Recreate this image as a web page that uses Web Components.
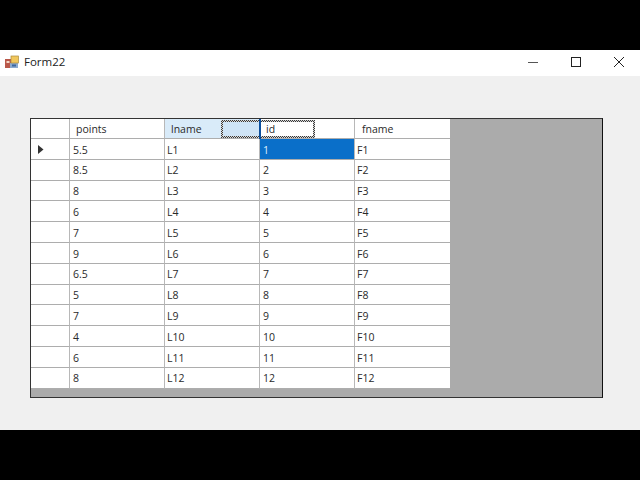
<!DOCTYPE html>
<html><head><meta charset="utf-8"><title>Form22</title>
<style>
html,body{margin:0;padding:0;background:#000;}
body{width:640px;height:480px;overflow:hidden;font-family:"Open Sans","Noto Sans",sans-serif;color:#222;}
</style></head><body>
<win-form>
  <title-bar slot="bar">Form22</title-bar>
  <data-grid></data-grid>
</win-form>
<script>
class WinForm extends HTMLElement{
  constructor(){super();const s=this.attachShadow({mode:"open"});
  s.innerHTML=`<style>
  :host{display:flex;flex-direction:column;height:380px;margin-top:50px;margin-bottom:50px;background:#f0f0f0;}
  .client{flex:1;padding:42px 37px 32px 30px;display:flex;min-height:0;}
  </style><slot name="bar"></slot><div class="client"><slot></slot></div>`;}
}
class TitleBar extends HTMLElement{
  constructor(){super();const s=this.attachShadow({mode:"open"});
  s.innerHTML=`<style>
  :host{display:flex;align-items:center;height:26px;box-sizing:border-box;padding-bottom:3px;background:#fff;flex:none;}
  .ico{margin-left:5px;width:14px;height:14px;flex:none;display:block;}
  .cap{margin-left:5px;font:11.5px "Open Sans",sans-serif;color:#222;flex:1;}
  .btns{display:flex;margin-right:0;}
  .btn{width:43px;height:23px;display:flex;align-items:center;justify-content:center;}
  svg{display:block;}
  </style>
  <svg class="ico" viewBox="0 0 14 14">
    <rect x="0" y="4" width="7" height="9" fill="#b9584a"/>
    <rect x="1.5" y="6" width="3" height="2" fill="#f4d9c8"/>
    <rect x="6" y="1" width="7.5" height="7" fill="#f1c75c"/>
    <rect x="5" y="8" width="8" height="5" fill="#8aa9cf"/>
    <rect x="7" y="9.5" width="4" height="2" fill="#3c67a0"/>
    <rect x="6" y="1" width="7.5" height="7" fill="none" stroke="#a98a3c" stroke-width=".7"/>
  </svg>
  <span class="cap"><slot></slot></span>
  <div class="btns">
    <div class="btn"><svg width="10" height="10" viewBox="0 0 10 10"><path d="M0 5.5H10" stroke="#555" fill="none"/></svg></div>
    <div class="btn"><svg width="10" height="10" viewBox="0 0 10 10"><rect x=".5" y=".5" width="9" height="9" stroke="#222" fill="none"/></svg></div>
    <div class="btn"><svg width="10" height="10" viewBox="0 0 10 10"><path d="M0 0L10 10M10 0L0 10" stroke="#222" fill="none"/></svg></div>
  </div>`;}
}
class DataGrid extends HTMLElement{
  constructor(){super();const s=this.attachShadow({mode:"open"});
  const pts=["5.5","8.5","8","6","7","9","6.5","5","7","4","6","8"];
  let cells=`<div class="h rh"></div><div class="h">points</div><div class="h hot">lname</div><div class="h">id</div><div class="h">fname</div>`;
  pts.forEach((p,i)=>{const n=i+1;
    cells+=`<div class="c rh">${i==0?'<svg width="6" height="9" viewBox="0 0 6 9"><path d="M0 0L5.5 4.5L0 9Z" fill="#333"/></svg>':''}</div>
    <div class="c">${p}</div><div class="c">L${n}</div><div class="c${i==0?' sel':''}">${n}</div><div class="c">F${n}</div>`;});
  s.innerHTML=`<style>
  :host{display:block;flex:1;position:relative;background:#ababab;border:1px solid #333;border-right-color:#111;overflow:hidden;}
  .g{display:grid;grid-template-columns:39px repeat(4,95px);grid-template-rows:20px repeat(12,20.8px);width:419px;font-size:10.5px;line-height:1;}
  .h,.c{box-sizing:border-box;background:#fff;border-right:1px solid #b8b8b8;border-bottom:1px solid #adadad;display:flex;align-items:center;color:#2a2a2a;white-space:nowrap;padding-top:2px;}
  .h{padding-left:6px;}
  .c{padding-left:3px;}
  .c:nth-child(5n+3),.c:nth-child(5n){padding-left:2px;}
  .g>:nth-child(5n){border-right:0;}
  .h:nth-child(5n){padding-left:7px;}
  .hot{background:#d9ebf9;}
  .rh{padding:2px 0 0 7px;}
  .sel{background:#0a6fc9;color:#dff2ff;}
  .drag{position:absolute;left:190px;top:1px;width:94px;height:18px;box-sizing:border-box;padding:2px;
    background:repeating-conic-gradient(#3a3a3a 0 25%,#d8d8d8 0 50%) 0 0/2px 2px;
    -webkit-mask:linear-gradient(#000 0 0) content-box exclude,linear-gradient(#000 0 0);mask:linear-gradient(#000 0 0) content-box exclude,linear-gradient(#000 0 0);}
  .tint{position:absolute;left:192px;top:3px;width:37px;height:14px;background:#cfe4f6;}
  .mark{position:absolute;left:228px;top:0;width:2px;height:20px;background:#0b4f9e;}
  </style><div class="g">${cells}</div><div class="tint"></div><div class="drag"></div><div class="mark"></div>`;}
}
customElements.define("title-bar",TitleBar);
customElements.define("win-form",WinForm);
customElements.define("data-grid",DataGrid);
</script>
</body></html>
